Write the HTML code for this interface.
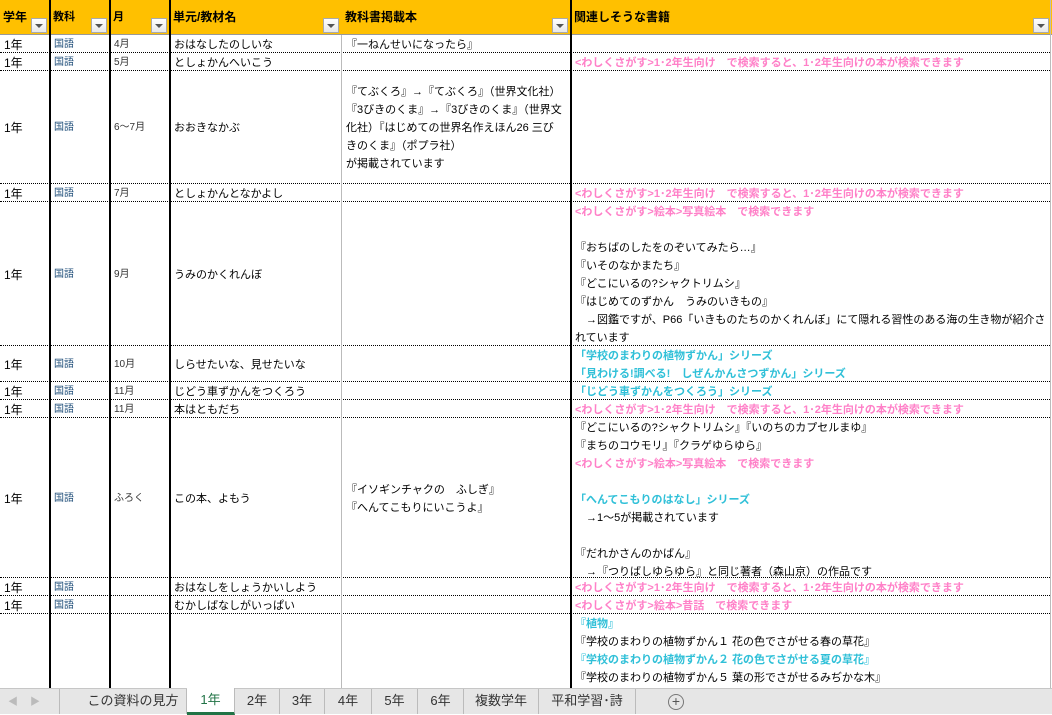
<!DOCTYPE html>
<html><head><meta charset="utf-8"><style>
*{margin:0;padding:0;box-sizing:border-box}
body{width:1052px;height:714px;overflow:hidden;background:#fff;font-family:"Liberation Sans","Noto Sans CJK JP",sans-serif;font-size:11px;color:#000;position:relative}
.c{position:absolute;display:flex;align-items:center;padding-left:4px;white-space:nowrap;overflow:hidden;line-height:18px;padding-top:1px}
.top{align-items:flex-start}
.s{font-size:10px;color:#1f4e79}
.m{font-size:10px;color:#333}
.hd{position:absolute;top:0;height:35px;background:#ffc000;font-weight:bold;padding:8px 0 0 3px;font-size:12px}
.fb{position:absolute;right:3px;bottom:2px;width:16px;height:15px;background:linear-gradient(#fff,#e8e8e8);border:1px solid #aaa}
.fb:after{content:"";position:absolute;left:3px;top:5px;border-left:4px solid transparent;border-right:4px solid transparent;border-top:4px solid #555}
.v{position:absolute;top:0;height:688px;width:2px;background:#000}
.hl{position:absolute;left:0;width:1050px;border-top:1px dotted #000}
.p{color:#ff80c8;font-weight:bold}
.b{color:#30c0d8;font-weight:bold}
.tabs{position:absolute;left:0;top:688px;width:1052px;height:26px;background:#e6e6e6;border-top:1px solid #c6c6c6;font-size:13px;color:#333}
.t{position:absolute;top:0;height:25px;line-height:24px;text-align:center;border-right:1px solid #bbb}
.t.a{background:#fff;color:#217346;border-bottom:3px solid #217346;top:-1px;height:27px}
</style></head><body>
<div class="hd" style="left:0;width:50px">学年<span class="fb"></span></div>
<div class="hd" style="left:50px;width:60px;font-size:11px">教科<span class="fb"></span></div>
<div class="hd" style="left:110px;width:60px;font-size:11px">月<span class="fb"></span></div>
<div class="hd" style="left:170px;width:172px">単元/教材名<span class="fb"></span></div>
<div class="hd" style="left:342px;width:229px">教科書掲載本<span class="fb"></span></div>
<div class="hd" style="left:571px;width:481px">関連しそうな書籍<span class="fb"></span></div>
<div style="position:absolute;left:0;top:34px;width:1052px;height:1px;background:#999"></div>

<div class="hl" style="top:52px"></div><div class="hl" style="top:70px"></div><div class="hl" style="top:183px"></div><div class="hl" style="top:201px"></div><div class="hl" style="top:345px"></div><div class="hl" style="top:381px"></div><div class="hl" style="top:399px"></div><div class="hl" style="top:417px"></div><div class="hl" style="top:577px"></div><div class="hl" style="top:595px"></div><div class="hl" style="top:613px"></div>

<div class="c" style="left:0;top:35px;width:50px;height:18px;font-size:12px">1年</div><div class="c s" style="left:50px;top:35px;width:60px;height:18px">国語</div><div class="c m" style="left:110px;top:35px;width:60px;height:18px">4月</div><div class="c" style="left:170px;top:35px;width:172px;height:18px">おはなしたのしいな</div><div class="c" style="left:342px;top:35px;width:229px;height:18px">『一ねんせいになったら』</div>

<div class="c" style="left:0;top:53px;width:50px;height:18px;font-size:12px">1年</div><div class="c s" style="left:50px;top:53px;width:60px;height:18px">国語</div><div class="c m" style="left:110px;top:53px;width:60px;height:18px">5月</div><div class="c" style="left:170px;top:53px;width:172px;height:18px">としょかんへいこう</div><div class="c p" style="left:571px;top:53px;width:480px;height:18px">&lt;わしくさがす&gt;1･2年生向け　で検索すると、1･2年生向けの本が検索できます</div>

<div class="c" style="left:0;top:71px;width:50px;height:113px;font-size:12px">1年</div><div class="c s" style="left:50px;top:71px;width:60px;height:113px">国語</div><div class="c m" style="left:110px;top:71px;width:60px;height:113px">6～7月</div><div class="c" style="left:170px;top:71px;width:172px;height:113px">おおきなかぶ</div><div class="c" style="left:342px;top:71px;width:229px;height:113px"><div>『てぶくろ』→『てぶくろ』（世界文化社）<br>『3びきのくま』→『3びきのくま』（世界文<br>化社）『はじめての世界名作えほん26 三び<br>きのくま』（ポプラ社）<br>が掲載されています</div></div>

<div class="c" style="left:0;top:184px;width:50px;height:18px;font-size:12px">1年</div><div class="c s" style="left:50px;top:184px;width:60px;height:18px">国語</div><div class="c m" style="left:110px;top:184px;width:60px;height:18px">7月</div><div class="c" style="left:170px;top:184px;width:172px;height:18px">としょかんとなかよし</div><div class="c p" style="left:571px;top:184px;width:480px;height:18px">&lt;わしくさがす&gt;1･2年生向け　で検索すると、1･2年生向けの本が検索できます</div>

<div class="c" style="left:0;top:202px;width:50px;height:144px;font-size:12px">1年</div><div class="c s" style="left:50px;top:202px;width:60px;height:144px">国語</div><div class="c m" style="left:110px;top:202px;width:60px;height:144px">9月</div><div class="c" style="left:170px;top:202px;width:172px;height:144px">うみのかくれんぼ</div><div class="c top" style="left:571px;top:202px;width:480px;height:144px"><div><span class="p">&lt;わしくさがす&gt;絵本&gt;写真絵本　で検索できます</span><br><br>『おちばのしたをのぞいてみたら…』<br>『いそのなかまたち』<br>『どこにいるの?シャクトリムシ』<br>『はじめてのずかん　うみのいきもの』<br>　→図鑑ですが、P66「いきものたちのかくれんぼ」にて隠れる習性のある海の生き物が紹介さ<br>れています</div></div>

<div class="c" style="left:0;top:346px;width:50px;height:36px;font-size:12px">1年</div><div class="c s" style="left:50px;top:346px;width:60px;height:36px">国語</div><div class="c m" style="left:110px;top:346px;width:60px;height:36px">10月</div><div class="c" style="left:170px;top:346px;width:172px;height:36px">しらせたいな、見せたいな</div><div class="c b top" style="left:571px;top:346px;width:480px;height:36px"><div>「学校のまわりの植物ずかん」シリーズ<br>「見わける!調べる!　しぜんかんさつずかん」シリーズ</div></div>

<div class="c" style="left:0;top:382px;width:50px;height:18px;font-size:12px">1年</div><div class="c s" style="left:50px;top:382px;width:60px;height:18px">国語</div><div class="c m" style="left:110px;top:382px;width:60px;height:18px">11月</div><div class="c" style="left:170px;top:382px;width:172px;height:18px">じどう車ずかんをつくろう</div><div class="c b" style="left:571px;top:382px;width:480px;height:18px">「じどう車ずかんをつくろう」シリーズ</div>

<div class="c" style="left:0;top:400px;width:50px;height:18px;font-size:12px">1年</div><div class="c s" style="left:50px;top:400px;width:60px;height:18px">国語</div><div class="c m" style="left:110px;top:400px;width:60px;height:18px">11月</div><div class="c" style="left:170px;top:400px;width:172px;height:18px">本はともだち</div><div class="c p" style="left:571px;top:400px;width:480px;height:18px">&lt;わしくさがす&gt;1･2年生向け　で検索すると、1･2年生向けの本が検索できます</div>

<div class="c" style="left:0;top:418px;width:50px;height:160px;font-size:12px">1年</div><div class="c s" style="left:50px;top:418px;width:60px;height:160px">国語</div><div class="c m" style="left:110px;top:418px;width:60px;height:160px">ふろく</div><div class="c" style="left:170px;top:418px;width:172px;height:160px">この本、よもう</div><div class="c" style="left:342px;top:418px;width:229px;height:160px"><div>『イソギンチャクの　ふしぎ』<br>『へんてこもりにいこうよ』</div></div><div class="c top" style="left:571px;top:418px;width:480px;height:160px"><div>『どこにいるの?シャクトリムシ』『いのちのカプセルまゆ』<br>『まちのコウモリ』『クラゲゆらゆら』<br><span class="p">&lt;わしくさがす&gt;絵本&gt;写真絵本　で検索できます</span><br><br><span class="b">「へんてこもりのはなし」シリーズ</span><br>　→1～5が掲載されています<br><br>『だれかさんのかばん』<br>　→『つりばしゆらゆら』と同じ著者（森山京）の作品です</div></div>

<div class="c" style="left:0;top:578px;width:50px;height:18px;font-size:12px">1年</div><div class="c s" style="left:50px;top:578px;width:60px;height:18px">国語</div><div class="c" style="left:170px;top:578px;width:172px;height:18px">おはなしをしょうかいしよう</div><div class="c p" style="left:571px;top:578px;width:480px;height:18px">&lt;わしくさがす&gt;1･2年生向け　で検索すると、1･2年生向けの本が検索できます</div>

<div class="c" style="left:0;top:596px;width:50px;height:18px;font-size:12px">1年</div><div class="c s" style="left:50px;top:596px;width:60px;height:18px">国語</div><div class="c" style="left:170px;top:596px;width:172px;height:18px">むかしばなしがいっぱい</div><div class="c p" style="left:571px;top:596px;width:480px;height:18px">&lt;わしくさがす&gt;絵本&gt;昔話　で検索できます</div>

<div class="c top" style="left:571px;top:614px;width:480px;height:74px"><div><span class="b">『植物』</span><br>『学校のまわりの植物ずかん１ 花の色でさがせる春の草花』<br><span class="b">『学校のまわりの植物ずかん２ 花の色でさがせる夏の草花』</span><br>『学校のまわりの植物ずかん５ 葉の形でさがせるみぢかな木』</div></div>

<div class="v" style="left:49px"></div><div class="v" style="left:109px"></div><div class="v" style="left:169px"></div><div class="v" style="left:341px;width:1px;background:#bbb;top:35px;height:653px"></div><div class="v" style="left:570px"></div><div class="v" style="left:1050px;width:1px;background:#bbb"></div>

<div class="tabs">
<span style="position:absolute;left:8px;top:4px;color:#bbb;font-size:10px">◀</span>
<span style="position:absolute;left:30px;top:4px;color:#bbb;font-size:10px">▶</span>
<div class="t" style="left:59px;width:21px;border-left:1px solid #bbb;border-right:none"></div>
<div class="t" style="left:80px;width:107px">この資料の見方</div>
<div class="t a" style="left:187px;width:48px">1年</div>
<div class="t" style="left:235px;width:45px">2年</div>
<div class="t" style="left:280px;width:45px">3年</div>
<div class="t" style="left:325px;width:47px">4年</div>
<div class="t" style="left:372px;width:46px">5年</div>
<div class="t" style="left:418px;width:46px">6年</div>
<div class="t" style="left:464px;width:75px">複数学年</div>
<div class="t" style="left:539px;width:97px">平和学習･詩</div>
<div style="position:absolute;left:668px;top:5px;width:16px;height:16px;border:1px solid #777;border-radius:50%;text-align:center;line-height:13px;color:#555;font-size:14px">+</div>
</div>
</body></html>
